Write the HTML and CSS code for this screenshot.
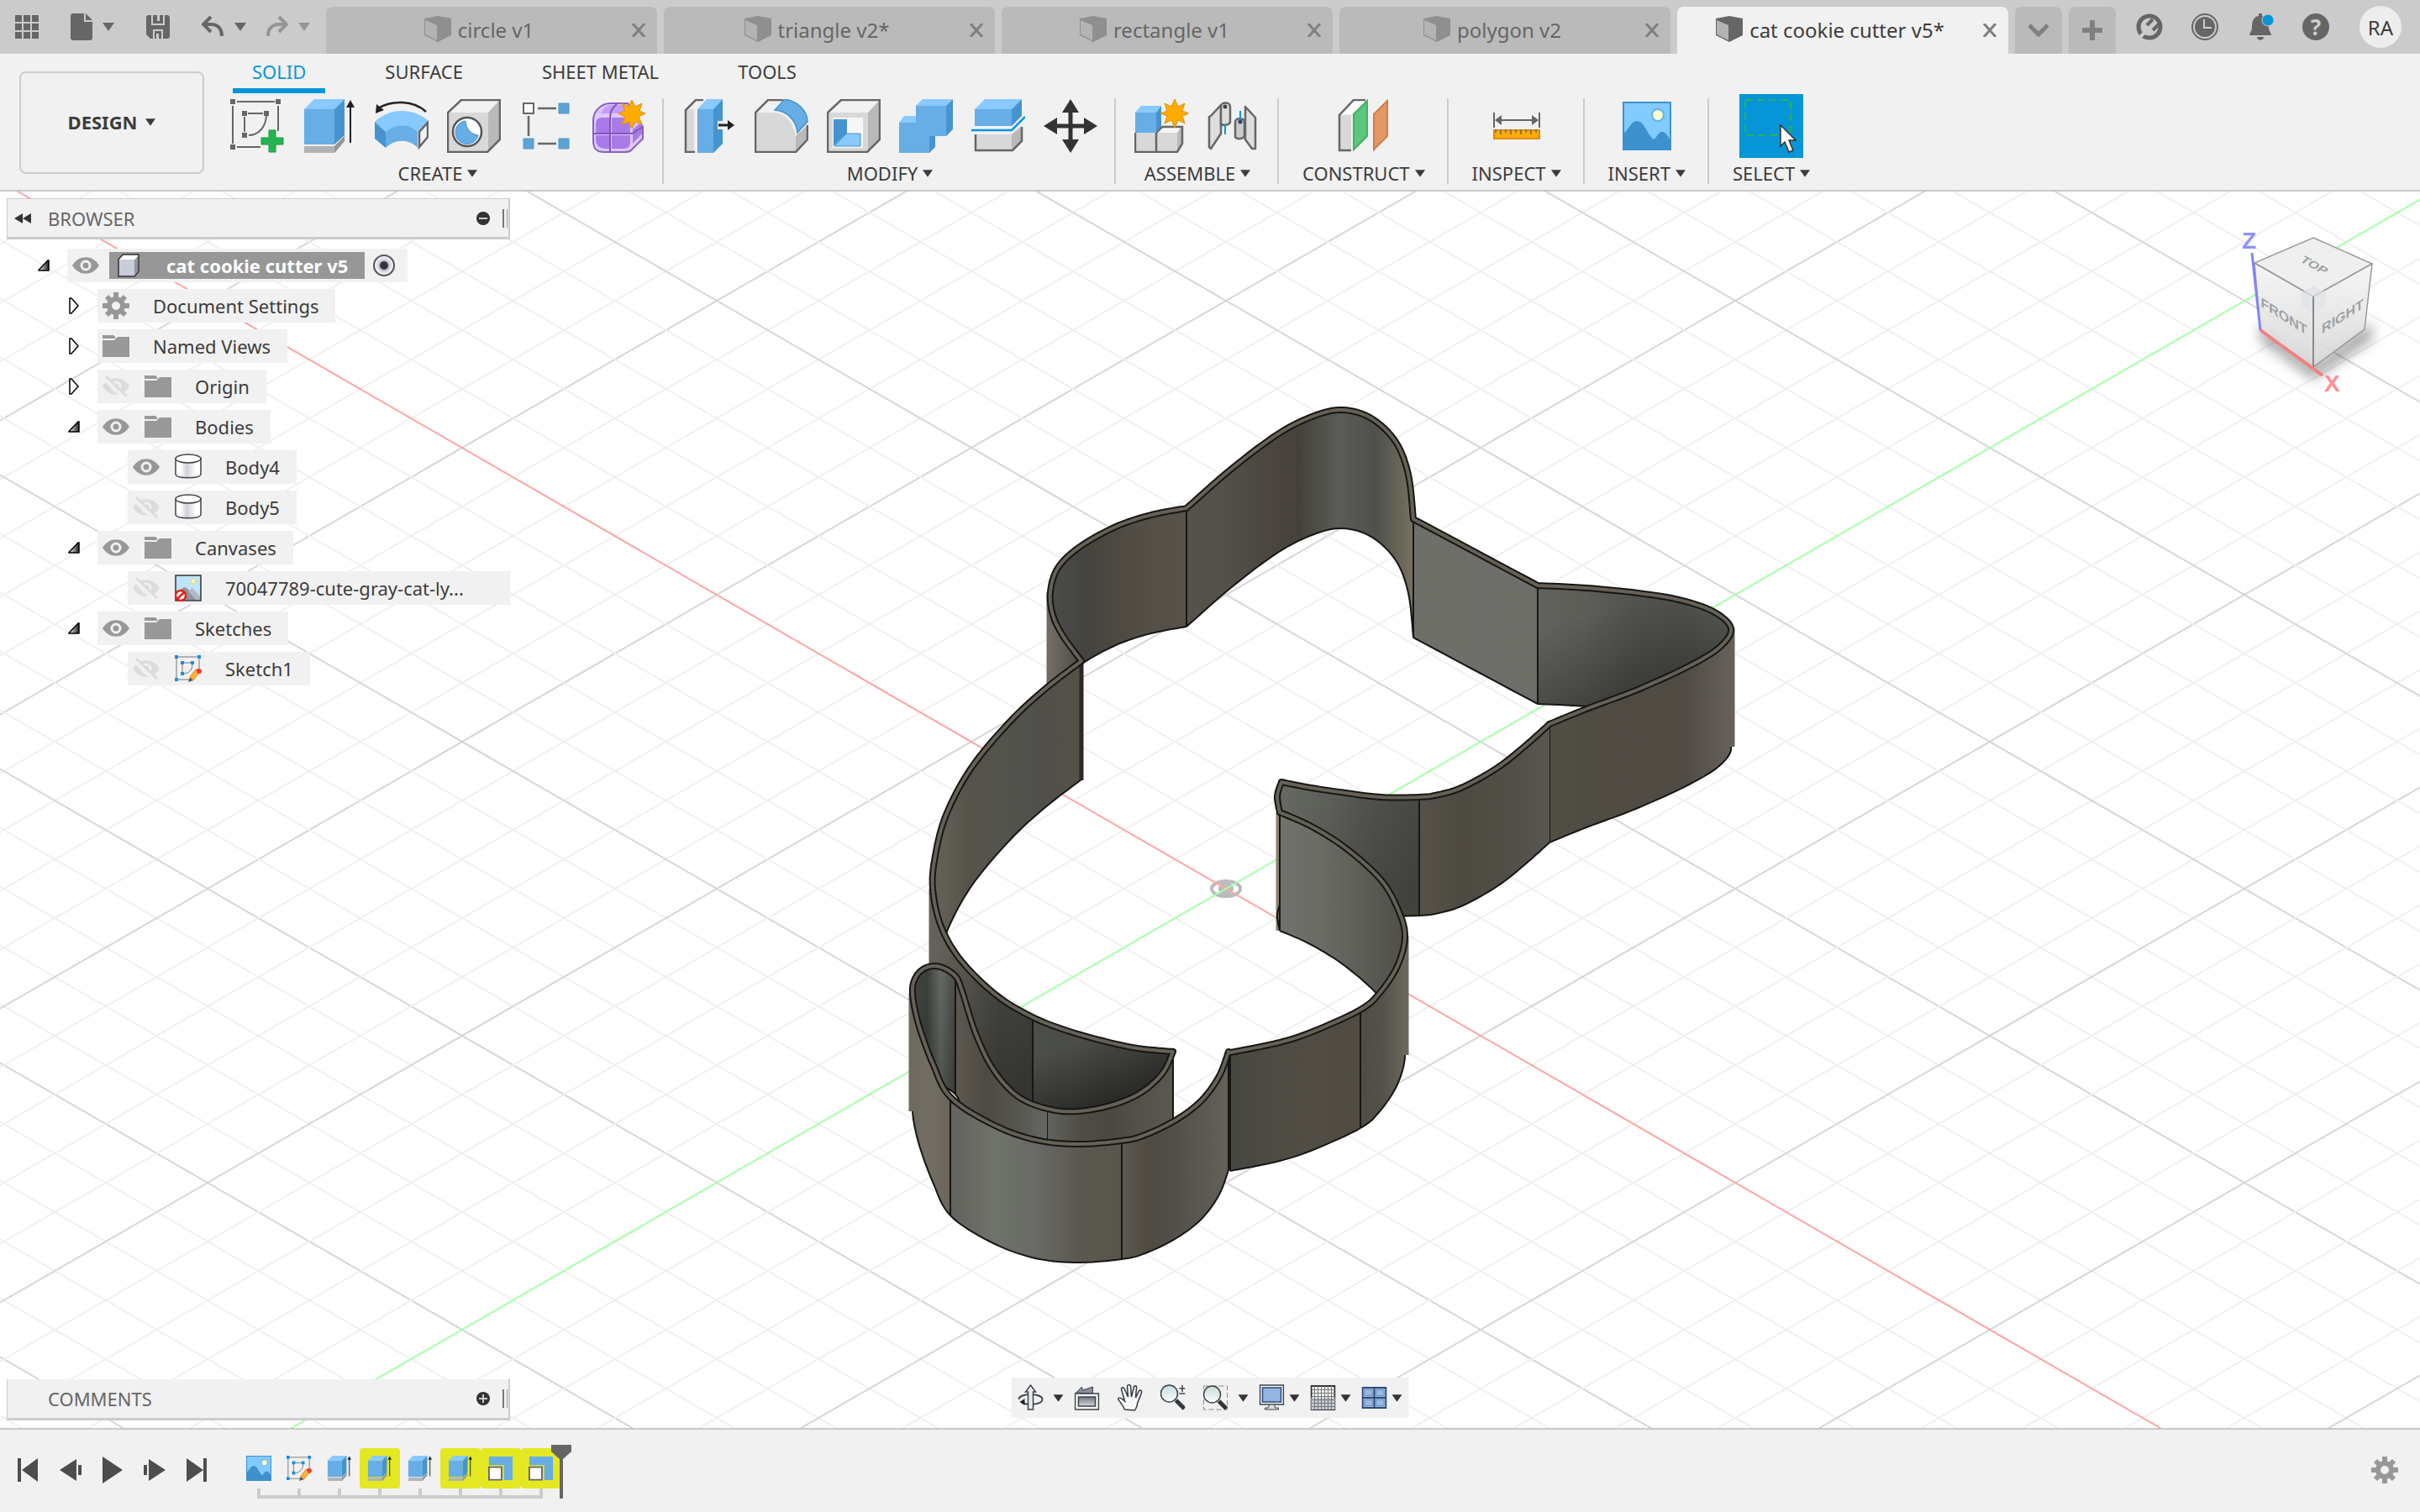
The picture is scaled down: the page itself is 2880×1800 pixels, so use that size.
FILE: index.html
```html
<!DOCTYPE html>
<html lang="en">
<head>
    <meta charset="UTF-8">
    <meta name="viewport" content="width=device-width, initial-scale=1.0">
    <title>cat cookie cutter v5*</title>
    <link rel="stylesheet" href="styles.css">
</head>
<body>
    <!-- shared icons -->
    <svg class="sprite" aria-hidden="true">
        <defs>
            <linearGradient id="g-steel" x1="0" y1="0" x2="0" y2="1"><stop offset="0" stop-color="#6f7681"/><stop offset="1" stop-color="#d5d8de"/></linearGradient>
            <linearGradient id="g-cyl"><stop offset="0" stop-color="#fff"/><stop offset=".2" stop-color="#fff"/><stop offset=".45" stop-color="#d0d1d5"/><stop offset=".8" stop-color="#fff"/></linearGradient>
            <linearGradient id="g-lens" x1="0" y1="0" x2="0" y2="1"><stop offset="0" stop-color="#c3dcda"/><stop offset="1" stop-color="#fbfefe"/></linearGradient>
            <linearGradient id="g-open"><stop offset="0" stop-color="#fff"/><stop offset="1" stop-color="#222"/></linearGradient>
            <linearGradient id="g-cube" x1="0" y1="0" x2="0" y2="1"><stop offset="0" stop-color="#f4f4f4"/><stop offset="1" stop-color="#d8d8d8"/></linearGradient>
        </defs>
        <symbol id="i-caret" viewBox="0 0 14 10"><path d="M0 0h14L7 10z" fill="currentColor"/></symbol>
        <symbol id="i-doc" viewBox="0 0 32 32">
            <path d="M0 3 16 0l16 3v20L16 31 0 23z" fill="currentColor"/>
            <path d="M1 5l14 6v18L1 22z" fill="#b2b4b4"/>
        </symbol>
        <symbol id="i-close" viewBox="0 0 16 16"><path d="M1 0 15 16M15 0 1 16" stroke="currentColor" stroke-width="3" fill="none"/></symbol>
        <symbol id="i-eye" viewBox="0 0 32 32">
            <path d="M0 16C8 3 24 3 32 16 24 29 8 29 0 16z" fill="#989898"/>
            <circle cx="16" cy="16" r="5" fill="none" stroke="#f1f1f1" stroke-width="3"/>
        </symbol>
        <symbol id="i-eye-off" viewBox="0 0 32 32">
            <path d="M0 16C8 3 24 3 32 16 24 29 8 29 0 16z" fill="#dcdcdc"/>
            <circle cx="16" cy="16" r="5" fill="none" stroke="#f1f1f1" stroke-width="3"/>
            <path d="M2 6 28 31" stroke="#f1f1f1" stroke-width="6"/>
            <path d="M4 4 29 28" stroke="#dcdcdc" stroke-width="3"/>
        </symbol>
        <symbol id="i-folder" viewBox="0 0 32 32"><path d="M0 3h13l3 3-2 1H0zM0 9h14l4-4h14v24H0z" fill="#989898"/></symbol>
        <symbol id="i-gear" viewBox="0 0 32 32">
            <circle cx="16" cy="16" r="8" fill="none" stroke="currentColor" stroke-width="6"/>
            <path d="M16 0v6M16 26v6M0 16h6M26 16h6M5 5l4 4M23 23l4 4M27 5l-4 4M9 23l-4 4" stroke="currentColor" stroke-width="6"/>
        </symbol>
        <symbol id="i-body" viewBox="0 0 32 32">
            <path d="M1 6v19c2 5 28 5 30 0V6z" fill="url(#g-cyl)" stroke="#3f4248" stroke-width="1.5"/>
            <ellipse cx="16" cy="6" rx="15" ry="5" fill="#fff" stroke="#3f4248" stroke-width="1.5"/>
        </symbol>
        <symbol id="i-sketch" viewBox="0 0 32 32">
            <path d="M4 2h24M2 4v23M29 4v14M4 29h13M10 9h11M9 11v10M21 10c0 8-4 11-10 12" fill="none" stroke="#777" stroke-width="1"/>
            <path d="M0 0h4v4H0zM27 0h4v4h-4zM0 27h4v4H0zM7 7h4v4H7zM19 7h4v4h-4zM7 20h4v4H7z" fill="#1590e6"/>
            <path d="M16 32l2-6 4 4z" fill="#555"/>
            <path d="M18 26l7-9 4 4-7 9z" fill="#fcb535" stroke="#d98c1c"/>
            <path d="M25 17l3-1 3 3-1 3z" fill="#f23a3a"/><circle cx="29" cy="19" r="3" fill="#f23a3a"/>
        </symbol>
        <symbol id="i-picture" viewBox="0 0 58 58">
            <path d="M1 1h56v56H1z" fill="#82cbff" stroke="#3d91cd" stroke-width="2"/>
            <circle cx="42" cy="16" r="7" fill="#ffffd0" stroke="#62b0e8" stroke-width="2"/>
            <path d="M1 38C7 34 10 23 17 23c9 0 12 16 20 22 4-2 5-9 10-9 6 0 7 7 10 10v11H1z" fill="#3d91cd"/>
        </symbol>
        <symbol id="i-extrude" viewBox="0 0 64 64">
            <path d="M2 56h36l12-12v6L38 64H2z" fill="#b2b2b2"/><path d="M38 56l12-12v6L38 64z" fill="#969696"/>
            <path d="M2 12h36v42H2z" fill="#67aee6"/><path d="M14 0h36L38 12H2z" fill="#88caff"/><path d="M38 12 50 0v43L38 54z" fill="#4594cf"/>
            <path d="M57 7v45" stroke="#222" stroke-width="2"/><path d="M52 10l5-9 5 9z" fill="#222"/>
        </symbol>
        <symbol id="i-scale" viewBox="0 0 32 32">
            <path d="M1 1h30v30H1z" fill="#67aee6"/><path d="M1 13h18v18H1z" fill="#fff" stroke="#e4e822" stroke-width="2"/>
            <path d="M1 14.500h16v16H1z" fill="#fff" stroke="#666" stroke-width="2"/>
        </symbol>
        <symbol id="i-closed" viewBox="0 0 14 20"><path d="M2 1h2l8 9-8 9H2z" fill="#fff" stroke="#000" stroke-width="1.500"/></symbol>
        <symbol id="i-opened" viewBox="0 0 14 20"><path d="M1 15.500 12 4h1v12H1z" fill="url(#g-open)" stroke="#000" stroke-width="1.500"/></symbol>
    </svg>

    <header class="topbar">
        <div class="quick">
            <button aria-label="Data panel"><svg width="28" height="28"><path d="M0 0h8v8H0zM10 0h8v8h-8zM20 0h8v8h-8zM0 10h8v8H0zM10 10h8v8h-8zM20 10h8v8h-8zM0 20h8v8H0zM10 20h8v8h-8zM20 20h8v8h-8z" fill="#666"/></svg></button>
            <button aria-label="File"><svg width="26" height="32"><path d="M2 0h14v10h10v20l-2 2H2l-2-2V2zM18 0l8 8h-8z" fill="#666"/></svg><svg class="caret"><use href="#i-caret"/></svg></button>
            <button aria-label="Save"><svg width="28" height="28"><path d="M2 0h24l2 2v24l-2 2H5l-5-5V2z" fill="#666"/><path d="M7 0v11h14V0M9 28V18h10v10" fill="none" stroke="#ccc" stroke-width="2"/><path d="M13 0h3v7h-3zM12 22h3v6h-3z" fill="#ccc"/></svg></button>
            <div class="history">
                <button aria-label="Undo"><svg width="27" height="26"><path d="M11 1 2 10l9 9M3 10h8c9 0 13 6 13 14" fill="none" stroke="#666" stroke-width="4"/></svg><svg class="caret"><use href="#i-caret"/></svg></button>
                <button class="faded" aria-label="Redo"><svg width="27" height="26"><path d="M16 1l9 9-9 9M24 10h-8C7 10 3 16 3 24" fill="none" stroke="#959595" stroke-width="4"/></svg><svg class="caret"><use href="#i-caret"/></svg></button>
            </div>
        </div>
        <nav class="doc-tabs">
            <div class="doc-tab"><a href="#"><svg class="doc"><use href="#i-doc"/></svg>circle v1</a><button aria-label="Close"><svg class="x"><use href="#i-close"/></svg></button></div>
            <div class="doc-tab"><a href="#"><svg class="doc"><use href="#i-doc"/></svg>triangle v2*</a><button aria-label="Close"><svg class="x"><use href="#i-close"/></svg></button></div>
            <div class="doc-tab"><a href="#"><svg class="doc"><use href="#i-doc"/></svg>rectangle v1</a><button aria-label="Close"><svg class="x"><use href="#i-close"/></svg></button></div>
            <div class="doc-tab"><a href="#"><svg class="doc"><use href="#i-doc"/></svg>polygon v2</a><button aria-label="Close"><svg class="x"><use href="#i-close"/></svg></button></div>
            <div class="doc-tab active"><a href="#"><svg class="doc"><use href="#i-doc"/></svg>cat cookie cutter v5*</a><button aria-label="Close"><svg class="x"><use href="#i-close"/></svg></button></div>
            <button class="tab-btn" aria-label="All tabs"><svg width="24" height="16"><path d="M1 2l11 11L23 2" fill="none" stroke="#808080" stroke-width="5"/></svg></button>
            <button class="tab-btn" aria-label="New tab"><svg width="24" height="24"><path d="M0 12h24M12 0v24" stroke="#808080" stroke-width="6"/></svg></button>
        </nav>
        <div class="account">
            <button aria-label="Extensions"><svg width="32" height="32"><circle cx="16" cy="16" r="13" fill="none" stroke="#666" stroke-width="5"/><path d="M3 30l9-9" stroke="#ccc" stroke-width="4"/><path d="M13 14l7-7M20 20l8-8" stroke="#666" stroke-width="4"/></svg></button>
            <button aria-label="Job status"><svg width="32" height="32"><circle cx="16" cy="16" r="15" fill="none" stroke="#666" stroke-width="2"/><circle cx="16" cy="16" r="12" fill="#666"/><path d="M15 7v10h9" fill="none" stroke="#ccc" stroke-width="2"/></svg></button>
            <button aria-label="Notifications"><svg width="32" height="32"><path d="M14 0h4v3c6 1 8 6 8 14 0 4 3 6 3 9H3c0-3 3-5 3-9 0-8 2-13 8-14zM12 28h8c0 5-8 5-8 0z" fill="#666"/><circle cx="25" cy="8" r="7" fill="#0696d7" stroke="#ccc"/></svg></button>
            <button class="help" aria-label="Help">?</button>
            <button class="avatar">RA</button>
        </div>
    </header>

    <section class="ribbon">
        <button class="workspace">DESIGN<svg class="caret small"><use href="#i-caret"/></svg></button>
        <div class="ribbon-main">
            <nav class="ribbon-tabs">
                <a class="active" href="#">SOLID</a>
                <a href="#">SURFACE</a>
                <a href="#">SHEET METAL</a>
                <a href="#">TOOLS</a>
            </nav>
            <div class="groups">
                <div class="group">
                    <div class="tools">
                        <button aria-label="Create sketch"><svg class="tool" viewBox="0 0 64 64"><path d="M8 3h45M3 8v45M57 8v30M8 57h28M21 17h18M17 21v18M43 20c-1 14-10 23-21 23" fill="none" stroke="#666" stroke-width="2"/><path d="M0 0h6v6H0zM54 0h6v6h-6zM0 54h6v6H0zM14 14h6v6h-6zM40 14h6v6h-6zM14 40h6v6h-6z" fill="#666"/><path d="M46 37h8v9h9v8h-9v9h-8v-9h-9v-8h9z" fill="#26b354" stroke="#169a40"/></svg></button>
                        <button aria-label="Extrude"><svg class="tool"><use href="#i-extrude"/></svg></button>
                        <button aria-label="Revolve"><svg class="tool" viewBox="0 0 64 64"><path d="M4 11C20 1 46 1 61 15" fill="none" stroke="#222" stroke-width="2.500"/><path d="M1 17l1-11 9 7z" fill="#222"/><path d="M0 27C18 10 46 10 64 26L52 39C42 30 24 30 13 39z" fill="#88caff"/><path d="M13 39C24 29 42 29 51 39v19c-10-11-27-11-38 0z" fill="#67aee6"/><path d="M0 27l13 12v19L0 47z" fill="#4594cf"/><path d="M53 39l10-11v17L53 57z" fill="#f1f1f1" stroke="#666" stroke-width="2.500"/></svg></button>
                        <button aria-label="Hole"><svg class="tool" viewBox="0 0 64 64"><path d="M1 16h48v47H1z" fill="#d8d8d8"/><path d="M16 1h47L49 16H1z" fill="#f2f2f2"/><path d="M63 1v47L49 63V16z" fill="#b9b9b9"/><path d="M17 1h46v47L48 63H1V16z" fill="none" stroke="#666" stroke-width="2.500"/><circle cx="24" cy="39" r="17" fill="#fff" stroke="#555" stroke-width="2.500"/><path d="M22 26c1 9 5 15 15 17-3 15-27 14-27-4 0-7 5-12 12-13z" fill="#67aee6" stroke="#4594cf"/></svg></button>
                        <button aria-label="Pattern"><svg class="tool" viewBox="0 0 64 64"><path d="M22 11h22M22 53h22M11 20v24" stroke="#666" stroke-width="2.500"/><path d="M5 5h12v12H5z" fill="#f8f8f8" stroke="#666" stroke-width="2"/><path d="M47 5h12v12H47zM47 47h12v12H47zM5 47h12v12H5z" fill="#5ea3d6" stroke="#4d96cc"/></svg></button>
                        <button aria-label="Create form"><svg class="tool" viewBox="0 0 64 64"><path d="M2 25C2 14 12 5 22 5h21l18 28v14L47 61c-2 2-5 2-8 2H15C7 63 2 60 2 50z" fill="#dcc8fb" stroke="#8b5fc4" stroke-width="2"/><path d="M12 15q4-8 12-8h20v10H12z" fill="#c39cff"/><path d="M5 30q0-7 6-8h10v18H5zM24 22h16q6 1 6 9v9H24zM5 43h16v16h-5Q5 58 5 49zM24 43h22v8q0 8-8 8H24zM49 36l11-9v14L49 53z" fill="#a97be8"/><path d="M2 41h46l13-8M22 63V22q0-10 8-16" fill="none" stroke="#8454bd" stroke-width="2"/><path d="M48 1l4 8 8-4-3 9 7 3-8 4 4 9-8-3-4 8-4-8-8 3 4-9-8-4 8-3-4-9 8 4z" fill="#ffab00" stroke="#e08e00"/></svg></button>
                    </div>
                    <button class="group-label">CREATE<svg class="caret small"><use href="#i-caret"/></svg></button>
                </div>
                <div class="group">
                    <div class="tools">
                        <button aria-label="Press pull"><svg class="tool" viewBox="0 0 64 64"><path d="M3 12h11v51H3z" fill="#d8d8d8"/><path d="M25 1H16L4 13v50h11" fill="none" stroke="#666" stroke-width="2.500"/><path d="M18 12h19v52H18z" fill="#67aee6"/><path d="M29 0h19L37 12H18z" fill="#88caff"/><path d="M37 12 48 0v53L37 64z" fill="#4594cf"/><path d="M42 26h12v-4l9 9-9 9v-4H42z" fill="#f1f1f1"/><path d="M43 31h12" stroke="#222" stroke-width="3"/><path d="M54 25l8 6-8 6z" fill="#222"/></svg></button>
                        <button aria-label="Fillet"><svg class="tool" viewBox="0 0 64 64"><path d="M1 16h20c18 0 28 16 28 34v13H1z" fill="#d8d8d8"/><path d="M49 44l14-13v17L49 63z" fill="#b9b9b9"/><path d="M34 1H16L1 16v47h48l14-15V31" fill="none" stroke="#666" stroke-width="2.500"/><path d="M36 0c17 3 27 15 27 27L51 40C50 26 39 14 24 13z" fill="#67aee6" stroke="#4594cf" stroke-width="1.500"/></svg></button>
                        <button aria-label="Shell"><svg class="tool" viewBox="0 0 64 64"><path d="M1 16h48v47H1z" fill="#d8d8d8"/><path d="M16 1h47L49 16H1z" fill="#f2f2f2"/><path d="M63 1v47L49 63V16z" fill="#b9b9b9"/><path d="M17 1h46v47L48 63H1V16z" fill="none" stroke="#666" stroke-width="2.500"/><path d="M7 22h36v36H7z" fill="#f6f6f6"/><path d="M8 24h16v17L8 56z" fill="#4594cf"/><path d="M9 56l14-15h17v15z" fill="#88caff" stroke="#4594cf"/></svg></button>
                        <button aria-label="Combine"><svg class="tool" viewBox="0 0 64 64"><path d="M0 28h20V8h36v36H36v20H0z" fill="#67aee6"/><path d="M28 0h36l-8 8H20zM6 20h14v8H0z" fill="#88caff"/><path d="M64 0v36l-8 8V8zM43 44v13l-7 7V44z" fill="#4594cf"/></svg></button>
                        <button aria-label="Split body"><svg class="tool" viewBox="0 0 64 64"><path d="M4 12h44v20H4z" fill="#67aee6"/><path d="M16 0h44L48 12H4z" fill="#88caff"/><path d="M60 0v20L48 32V12z" fill="#4594cf"/><path d="M0 37h48l16-16" fill="none" stroke="#0696e7" stroke-width="2.500"/><path d="M5 42h43l11-9v17L49 61H5z" fill="#d8d8d8"/><path d="M48 42l11-9v17L48 61z" fill="#b9b9b9"/><path d="M5 42v19h44l11-11V33" fill="none" stroke="#666" stroke-width="2.500"/></svg></button>
                        <button aria-label="Move"><svg class="tool" viewBox="0 0 64 64"><path d="M32 10v44M10 32h44" stroke="#333" stroke-width="5"/><path d="M32 0l10 16H22zM32 64l10-16H22zM0 32l16-10v20zM64 32 48 22v20z" fill="#333"/></svg></button>
                    </div>
                    <button class="group-label">MODIFY<svg class="caret small"><use href="#i-caret"/></svg></button>
                </div>
                <div class="group">
                    <div class="tools">
                        <button aria-label="New component"><svg class="tool" viewBox="0 0 64 64"><path d="M1 40h25v23H1zM26 40h25v23H26z" fill="#d8d8d8"/><path d="M26 40l6-7h24l-5 7z" fill="#f6f6f6"/><path d="M51 40l5-7v20l-5 10z" fill="#b9b9b9"/><path d="M1 40v23h50l6-10V33H33l-7 7v23" fill="none" stroke="#666" stroke-width="2.500"/><path d="M1 16h25v24H1z" fill="#67aee6"/><path d="M8 8h24l-6 8H1z" fill="#88caff"/><path d="M32 8v24l-6 8V16z" fill="#4594cf"/><path d="M48 0l4 9 8-4-3 9 8 3-8 3 3 9-8-4-4 9-4-9-8 4 3-9-8-3 8-3-3-9 8 4z" fill="#ffab00" stroke="#e08e00"/></svg></button>
                        <button aria-label="Joint"><svg class="tool" viewBox="0 0 64 64"><g stroke="#666" stroke-width="2.500" stroke-linejoin="round"><path d="M5 20 17 7v34L5 59l-2-2V21z" fill="#dedede"/><path d="M17 9c0-6 11-6 11 0v18c0 3-6 5-11 3z" fill="#ddd"/><path d="M46 9l12 13v37l-4 0-8-11z" fill="#dedede"/><path d="M34 27c0-5 11-5 11 0v17c-2 4-9 4-11 1z" fill="#ccc"/></g><circle cx="22" cy="9" r="2.500" fill="#444"/><path d="M22 30v12M40 14v12" stroke="#0696e7" stroke-width="2"/><circle cx="40" cy="27" r="2.500" fill="#345"/></svg></button>
                    </div>
                    <button class="group-label">ASSEMBLE<svg class="caret small"><use href="#i-caret"/></svg></button>
                </div>
                <div class="group">
                    <div class="tools">
                        <button aria-label="Offset plane"><svg class="tool" viewBox="0 0 64 64"><path d="M3 19h14v43H3z" fill="#d8d8d8"/><path d="M3 18 19 1h15L18 18z" fill="#fff"/><path d="M34 1H20L3 19v42h14" fill="none" stroke="#666" stroke-width="2.500"/><path d="M20 18 36 2v42L20 60z" fill="#5bc77d" stroke="#45ae68" stroke-width="2"/><path d="M44 18 60 2v42L44 60z" fill="#e59864" stroke="#cc7f4c" stroke-width="2"/></svg></button>
                    </div>
                    <button class="group-label">CONSTRUCT<svg class="caret small"><use href="#i-caret"/></svg></button>
                </div>
                <div class="group">
                    <div class="tools">
                        <button aria-label="Measure"><svg class="tool" viewBox="0 0 64 64"><path d="M5 16v18M59 16v18M10 25h44" stroke="#666" stroke-width="2"/><path d="M6 25l8-6v12zM58 25l-8-6v12z" fill="#666"/><path d="M5 37h54v10H5z" fill="#ffab00" stroke="#e08e00" stroke-width="2"/><path d="M7 36v4M13 36v6M19 36v4M25 36v6M31 36v4M37 36v6M43 36v4M49 36v6M55 36v4" stroke="#666" stroke-width="1.500"/></svg></button>
                    </div>
                    <button class="group-label">INSPECT<svg class="caret small"><use href="#i-caret"/></svg></button>
                </div>
                <div class="group">
                    <div class="tools">
                        <button aria-label="Insert canvas"><svg class="picture"><use href="#i-picture"/></svg></button>
                    </div>
                    <button class="group-label">INSERT<svg class="caret small"><use href="#i-caret"/></svg></button>
                </div>
                <div class="group">
                    <div class="tools">
                        <button class="selected" aria-label="Select"><svg width="76" height="76"><path d="M7 7h54v42H7z" fill="none" stroke="#27b454" stroke-width="2" stroke-dasharray="9 5"/><path d="M49 37v25l5-5 5 12 5-2-5-12h8z" fill="#fff" stroke="#333" stroke-width="1.500"/></svg></button>
                    </div>
                    <button class="group-label">SELECT<svg class="caret small"><use href="#i-caret"/></svg></button>
                </div>
            </div>
        </div>
    </section>

    <main class="viewport">
        <svg class="scene" viewBox="0 228 2880 1472" preserveAspectRatio="xMidYMid slice">
            <defs id="fills"></defs>
            <g id="grid"></g>
            <ellipse cx="1459" cy="1058" rx="17" ry="9" fill="#fff" fill-opacity=".4" stroke="#bcbcbc" stroke-width="4"/>
            <ellipse cx="1459" cy="1058" rx="9" ry="9" fill="#bcbcbc"/>
            <g id="axes" fill="none" stroke-width="2">
                <path d="M-273 58 3191 2058" stroke="#ffa5a5"/>
                <path d="M-273 2058 3191 58" stroke="#a5ffa5"/>
            </g>
            <g id="walls"></g>
            <g id="rim" fill="none" stroke-linejoin="round" stroke-linecap="round"></g>
        </svg>

        <aside class="panel">
            <div class="panel-head">
                <button aria-label="Collapse"><svg width="20" height="14"><path d="M0 7 10 1v12zM10 7l10-6v12z" fill="#333"/></svg></button>
                <h2>BROWSER</h2>
                <button aria-label="Hide panel"><svg width="18" height="18"><circle cx="9" cy="9" r="8" fill="#333"/><path d="M4 9h10" stroke="#ccc" stroke-width="2"/></svg></button>
                <span class="grip"></span>
            </div>
            <ul class="tree">
                <li>
                    <div class="node root"><svg class="arrow"><use href="#i-opened"/></svg>
                        <div class="row"><svg class="ico"><use href="#i-eye"/></svg><span class="name"><svg width="26" height="28"><path d="M1 7 6 1h19v20l-5 6H1z" fill="#c8cdd8" stroke="#333" stroke-width="1.500"/><path d="M2 7 7 2h17l-4 5z" fill="#fff"/><path d="M20 8l4-5v18l-4 5z" fill="#8f95a1"/></svg>cat cookie cutter v5</span><input type="radio" name="component" aria-label="Activate component" checked></div>
                    </div>
                    <ul>
                        <li><div class="node"><svg class="arrow"><use href="#i-closed"/></svg><div class="row"><svg class="ico gear"><use href="#i-gear"/></svg><span>Document Settings</span></div></div></li>
                        <li><div class="node"><svg class="arrow"><use href="#i-closed"/></svg><div class="row"><svg class="ico"><use href="#i-folder"/></svg><span>Named Views</span></div></div></li>
                        <li><div class="node"><svg class="arrow"><use href="#i-closed"/></svg><div class="row"><svg class="ico"><use href="#i-eye-off"/></svg><svg class="ico"><use href="#i-folder"/></svg><span>Origin</span></div></div></li>
                        <li><div class="node"><svg class="arrow"><use href="#i-opened"/></svg><div class="row"><svg class="ico"><use href="#i-eye"/></svg><svg class="ico"><use href="#i-folder"/></svg><span>Bodies</span></div></div>
                            <ul>
                                <li><div class="node"><span class="arrow"></span><div class="row"><svg class="ico"><use href="#i-eye"/></svg><svg class="ico"><use href="#i-body"/></svg><span>Body4</span></div></div></li>
                                <li><div class="node"><span class="arrow"></span><div class="row"><svg class="ico"><use href="#i-eye-off"/></svg><svg class="ico"><use href="#i-body"/></svg><span>Body5</span></div></div></li>
                            </ul>
                        </li>
                        <li><div class="node"><svg class="arrow"><use href="#i-opened"/></svg><div class="row"><svg class="ico"><use href="#i-eye"/></svg><svg class="ico"><use href="#i-folder"/></svg><span>Canvases</span></div></div>
                            <ul>
                                <li><div class="node"><span class="arrow"></span><div class="row long"><svg class="ico"><use href="#i-eye-off"/></svg><svg class="ico" viewBox="0 0 32 32"><path d="M1 1h30v30H1z" fill="#bfe3f7" stroke="#333" stroke-width="1.500"/><circle cx="22" cy="8" r="3" fill="#fff7b0" stroke="#f5d060"/><path d="M2 24c6-8 9-10 12-8l16 14H2z" fill="#8d949c"/><path d="M16 20l5-4 9 10v4h-5z" fill="#b3b9c2"/><circle cx="7" cy="25" r="6" fill="#fff" stroke="#e8201c" stroke-width="2.500"/><path d="M3 29l8-8" stroke="#e8201c" stroke-width="2.500"/></svg><span>70047789-cute-gray-cat-ly...</span></div></div></li>
                            </ul>
                        </li>
                        <li><div class="node"><svg class="arrow"><use href="#i-opened"/></svg><div class="row"><svg class="ico"><use href="#i-eye"/></svg><svg class="ico"><use href="#i-folder"/></svg><span>Sketches</span></div></div>
                            <ul>
                                <li><div class="node"><span class="arrow"></span><div class="row"><svg class="ico"><use href="#i-eye-off"/></svg><svg class="ico"><use href="#i-sketch"/></svg><span>Sketch1</span></div></div></li>
                            </ul>
                        </li>
                    </ul>
                </li>
            </ul>
        </aside>

        <svg class="viewcube" width="150" height="230" viewBox="2650 250 150 230">
            <defs><filter id="soft" x="-30%" y="-30%" width="160%" height="160%"><feGaussianBlur stdDeviation="8"/></filter></defs>
            <path d="M2690 385l63 50 68-50 2 18-70 48-62-46z" fill="#000" fill-opacity=".4" filter="url(#soft)"/>
            <g fill-opacity=".9" stroke="#9a9a9a" stroke-width="1.500">
                <path d="M2753 283l70 31-70 39-70-40z" fill="#ededed"/>
                <path d="M2683 313l70 40v84l-63-44z" fill="url(#g-cube)"/>
                <path d="M2823 314l-70 39v84l61-45z" fill="url(#g-cube)"/>
            </g>
            <path d="M2753 340l15 8v16l-15 9-15-9v-16z" fill="#dfe3e8" fill-opacity=".7"/>
            <path d="M2753 353v84" stroke="#8a8a8a" stroke-width="2"/>
            <path d="M2680 301l10 92" stroke="#8484f4" stroke-width="3"/>
            <path d="M2690 393l74 54" stroke="#f28080" stroke-width="4"/>
            <g class="face-text" text-anchor="middle">
                <text transform="translate(2751 319) matrix(.9 .5 -.6 .6 0 0)">TOP</text>
                <text transform="translate(2718 382) skewY(32)">FRONT</text>
                <text transform="translate(2788 382) skewY(-32)">RIGHT</text>
            </g>
            <text class="axis-z" x="2668" y="296">Z</text>
            <text class="axis-x" x="2766" y="466">X</text>
        </svg>

        <aside class="panel comments">
            <div class="panel-head">
                <h2>COMMENTS</h2>
                <button aria-label="Show comments"><svg width="18" height="18"><circle cx="9" cy="9" r="8" fill="#333"/><path d="M4 9h10M9 4v10" stroke="#ccc" stroke-width="2"/></svg></button>
                <span class="grip"></span>
            </div>
        </aside>

        <div class="navbar">
            <button class="wide" aria-label="Orbit"><svg class="nav"><path d="M1 18c0-8 28-8 28 0 0 6-18 8-25 3" fill="none" stroke="#3d434b" stroke-width="2"/><path d="M12 30V9H9l6-8 6 8h-3v21z" fill="#e8eaec" stroke="#3d434b" stroke-width="1.500"/><path d="M2 21l6-4v8z" fill="#222"/></svg><svg class="caret nav-caret"><use href="#i-caret"/></svg></button>
            <button class="single" aria-label="Look at"><svg class="nav"><path d="M2 10 9 3l1 4 12-4v8z" fill="#8a9099" stroke="#3d434b"/><path d="M1 11h28v19H1z" fill="#f6f6f8" stroke="#3d434b" stroke-width="1.500"/><path d="M5 15h20v11H5z" fill="url(#g-steel)" stroke="#3d434b" stroke-width="1.500"/></svg></button>
            <button class="single" aria-label="Pan"><svg class="nav"><path d="M9 30C7 25 3 21 1 17c2-2 4-1 8 3L5 6c0-3 3-3 4 0l4 9-1-13c1-2 3-2 4 0l1 13 3-12c1-2 4-1 3 1l-1 12 4-8c2-2 4 0 3 2l-5 13c0 4-2 6-3 8z" fill="#f8f8f8" stroke="#333a42" stroke-width="1.500"/></svg></button>
            <button class="single" aria-label="Zoom"><svg class="nav"><circle cx="11" cy="11" r="10" fill="url(#g-lens)" stroke="#3d434b" stroke-width="1.500"/><path d="M19 19l10 10" stroke="#33383f" stroke-width="5"/><path d="M23 5h7M26.500 1v8M23 11h7" stroke="#444" stroke-width="1.500"/></svg></button>
            <button class="fit" aria-label="Fit"><svg class="nav"><path d="M1 2h28v28H1z" fill="none" stroke="#888" stroke-dasharray="6 3"/><circle cx="11" cy="12" r="10" fill="url(#g-lens)" stroke="#444" stroke-width="1.500"/><path d="M19 20l9 9" stroke="#333" stroke-width="5"/></svg><svg class="caret nav-caret"><use href="#i-caret"/></svg></button>
            <button aria-label="Display settings"><svg class="nav"><path d="M1 1h28v23H1z" fill="#f4f4f4" stroke="#3d434b" stroke-width="1.500"/><path d="M4 4h22v17H4z" fill="#94b5df" stroke="#2b4a7a" stroke-width="1.500"/><path d="M12 24h6l1 4h4v2H7v-2h4z" fill="#ddd" stroke="#3d434b"/></svg><svg class="caret nav-caret"><use href="#i-caret"/></svg></button>
            <button aria-label="Grid and snaps"><svg class="nav"><path d="M1 2h28v28H1z" fill="#f4f5f8" stroke="#333" stroke-width="2"/><path d="M1 16h28v14H1z" fill="#c3cad6"/><path d="M5 2v28M9 2v28M13 2v28M17 2v28M21 2v28M25 2v28M1 6h28M1 10h28M1 14h28M1 18h28M1 22h28M1 26h28" stroke="#777" shape-rendering="crispEdges"/></svg><svg class="caret nav-caret"><use href="#i-caret"/></svg></button>
            <button aria-label="Viewports"><svg class="nav"><path d="M1 4h28v24H1z" fill="#9cb9df" stroke="#2b4a7a" stroke-width="2"/><path d="M15 4v24M1 16h28" stroke="#2b4a7a" stroke-width="2"/><path d="M3.500 6.500h9v7h-9zM17.500 6.500h9v7h-9zM3.500 18.500h9v7h-9zM17.500 18.500h9v7h-9z" fill="none" stroke="#6d8fc0"/></svg><svg class="caret nav-caret"><use href="#i-caret"/></svg></button>
        </div>
    </main>

    <footer class="timeline">
        <div class="playback">
            <button aria-label="Go to start"><svg width="26" height="30"><path d="M0 1h4v28H0zM24 1v28L5 15z" fill="#4d4d4d"/></svg></button>
            <button aria-label="Step back"><svg width="26" height="30"><path d="M20 2v26L0 15zM22 9h4v12h-4z" fill="#4d4d4d"/></svg></button>
            <button aria-label="Play"><svg width="24" height="32"><path d="M0 0v32l24-16z" fill="#4d4d4d"/></svg></button>
            <button aria-label="Step forward"><svg width="26" height="30"><path d="M6 2v26l20-13zM0 9h4v12H0z" fill="#4d4d4d"/></svg></button>
            <button aria-label="Go to end"><svg width="26" height="30"><path d="M1 1v28l20-14zM21 1h4v28h-4z" fill="#4d4d4d"/></svg></button>
        </div>
        <ol class="features">
            <li><button aria-label="Canvas"><svg class="feat"><use href="#i-picture"/></svg></button></li>
            <li><button aria-label="Sketch1"><svg class="feat"><use href="#i-sketch"/></svg></button></li>
            <li><button aria-label="Extrude1"><svg class="feat"><use href="#i-extrude"/></svg></button></li>
            <li><button class="warn" aria-label="Extrude2"><svg class="feat"><use href="#i-extrude"/></svg></button></li>
            <li><button aria-label="Extrude3"><svg class="feat"><use href="#i-extrude"/></svg></button></li>
            <li><button class="warn" aria-label="Extrude4"><svg class="feat"><use href="#i-extrude"/></svg></button></li>
            <li><button class="warn" aria-label="Scale1"><svg class="feat"><use href="#i-scale"/></svg></button></li>
            <li><button class="warn" aria-label="Scale2"><svg class="feat"><use href="#i-scale"/></svg></button></li>
            <li class="marker"><svg width="24" height="64"><path d="M0 0h24v8l-10 9v47h-4V17L0 8z" fill="#666"/></svg></li>
        </ol>
        <button class="settings" aria-label="Timeline settings"><svg class="ico"><use href="#i-gear"/></svg></button>
    </footer>

    <script src="scene.js"></script>
</body>
</html>
```

FILE: styles.css
```css
* {
    box-sizing: border-box;
}
body {
    margin: 0;
    height: 100vh;
    display: flex;
    flex-direction: column;
    font-family: "Noto Sans", "Open Sans", sans-serif;
    font-size: 22px;
    color: #3c3c3c;
    background-color: #f1f1f1;
}
button {
    display: flex;
    align-items: center;
    justify-content: center;
    padding: 0;
    border: none;
    background: none;
    color: inherit;
    font: inherit;
    cursor: pointer;
}
a {
    color: inherit;
    text-decoration: none;
}
svg {
    display: block;
    flex: none;
}
ul, ol {
    list-style: none;
    margin: 0;
    padding: 0;
}
.sprite {
    position: absolute;
    width: 0;
    height: 0;
}
.caret {
    width: 14px;
    height: 10px;
}
.caret.small {
    width: 12px;
    height: 9px;
}

/* top bar */
.topbar {
    display: flex;
    height: 64px;
    background-color: #cbcbcb;
}
.quick {
    flex: none;
    display: flex;
    align-items: center;
    gap: 38px;
    width: 388px;
    padding-left: 18px;
}
.quick button {
    gap: 12px;
    color: #666;
}
.quick .faded {
    color: #959595;
}
.history {
    display: flex;
    gap: 23px;
}
.doc-tabs {
    flex: 1;
    display: flex;
    gap: 8px;
    padding-top: 8px;
}
.doc-tab {
    flex: 1;
    display: flex;
    align-items: center;
    padding-right: 14px;
    border-radius: 8px 8px 0 0;
    background-color: #bababa;
    color: #666;
    font-size: 24px;
}
.doc-tab a {
    flex: 1;
    display: flex;
    align-items: center;
    justify-content: center;
    gap: 8px;
    height: 56px;
    padding-bottom: 2px;
    white-space: nowrap;
}
.doc {
    width: 32px;
    height: 32px;
    color: #8f8f8f;
}
.x {
    width: 16px;
    height: 16px;
    color: #808080;
}
.doc-tab.active {
    background-color: #f1f1f1;
    color: #3c3c3c;
}
.active .doc {
    color: #666;
}
.tab-btn {
    width: 56px;
    border-radius: 8px 8px 0 0;
    background-color: #bababa;
}
.account {
    flex: none;
    display: flex;
    align-items: center;
    gap: 34px;
    padding: 0 22px 0 24px;
}
.help {
    width: 32px;
    height: 32px;
    border-radius: 50%;
    background-color: #666;
    color: #ccc;
    font-weight: bold;
    font-size: 26px;
    line-height: 32px;
}
.avatar {
    width: 50px;
    height: 50px;
    margin-left: 2px;
    border-radius: 50%;
    background-color: #ededed;
    font-size: 24px;
}

/* ribbon */
.ribbon {
    display: flex;
    height: 164px;
    border-bottom: 2px solid #c8c8c8;
}
.workspace {
    flex: none;
    gap: 10px;
    width: 220px;
    height: 122px;
    margin: 21px 0 0 23px;
    padding-bottom: 2px;
    border: 2px solid #ccc;
    border-radius: 8px;
    font-weight: bold;
}
.ribbon-tabs {
    display: flex;
    gap: 48px;
    height: 48px;
    padding-left: 34px;
}
.ribbon-tabs a {
    height: 47px;
    padding: 0 23px;
    line-height: 42px;
}
.ribbon-tabs .active {
    color: #0696d7;
    border-bottom: 6px solid #0696d7;
}
.groups {
    display: flex;
    padding-left: 9px;
}
.group {
    position: relative;
    display: flex;
    flex-direction: column;
    align-items: center;
    padding: 0 16px;
}
.group + .group::before {
    content: "";
    position: absolute;
    left: -2px;
    top: 5px;
    width: 2px;
    height: 102px;
    background-color: #ccc;
}
.tools {
    display: flex;
    gap: 10px;
}
.tools button {
    width: 76px;
    height: 76px;
}
.tool {
    width: 64px;
    height: 64px;
}
.picture {
    width: 58px;
    height: 58px;
}
.selected {
    background-color: #0696d7;
}
.group-label {
    gap: 6px;
    height: 36px;
    padding: 0 12px;
}

/* 3d viewport */
.viewport {
    position: relative;
    flex: 1;
    overflow: hidden;
    background-color: #fff;
}
.scene {
    position: absolute;
    width: 100%;
    height: 100%;
}
.panel {
    position: absolute;
    left: 8px;
    top: 8px;
    width: 599px;
}
.panel-head {
    display: flex;
    align-items: center;
    height: 49px;
    padding: 0 1px 0 8px;
    border: 1px solid #ccc;
    border-width: 1px 2px 3px 1px;
    background-color: #f1f1f1;
}
.panel-head h2 {
    flex: 1;
    margin: 0 0 0 20px;
    font-size: 22px;
    font-weight: normal;
    color: #666;
}
.grip {
    width: 6px;
    height: 22px;
    margin-left: 14px;
    border-left: 2px solid #777;
    border-right: 1px solid #999;
}
.panel.comments {
    top: auto;
    bottom: 9px;
}
.comments .panel-head {
    border-top: none;
}
.comments h2 {
    margin-left: 40px;
}
.tree {
    padding: 11px 0 0 37px;
}
.tree ul {
    padding-left: 36px;
}
.node {
    display: flex;
    align-items: center;
    height: 40px;
    margin-bottom: 8px;
}
.arrow {
    width: 14px;
    height: 20px;
    margin-right: 21px;
}
.row {
    display: flex;
    align-items: center;
    gap: 18px;
    height: 40px;
    padding: 0 20px 0 6px;
    background-color: #f1f1f1;
    white-space: nowrap;
}
.row.long {
    flex: 1;
}
.row > span {
    margin-left: 10px;
}
.ico {
    width: 32px;
    height: 32px;
}
.gear {
    color: #989898;
}
.root .row {
    gap: 10px;
    padding-right: 15px;
}
.root .name {
    display: flex;
    align-items: center;
    gap: 32px;
    height: 32px;
    margin-left: 2px;
    padding: 0 20px 0 10px;
    background-color: #979797;
    color: #fff;
    font-weight: bold;
}
.root input {
    appearance: none;
    width: 26px;
    height: 26px;
    margin: 0;
    border: 2px solid #555;
    border-radius: 50%;
    background: radial-gradient(circle, #333 0 4px, #c9cedb 6px, #eef0f5 10px);
}
.viewcube {
    position: absolute;
    right: 80px;
    top: 22px;
    overflow: visible;
}
.face-text {
    font: bold 16px "Liberation Sans", sans-serif;
    fill: #9ea2a6;
}
.axis-z, .axis-x {
    font: bold 28px "Liberation Sans", sans-serif;
    fill: #9090ff;
}
.axis-x {
    fill: #ff9090;
}
.navbar {
    position: absolute;
    left: 50%;
    bottom: 12px;
    display: flex;
    align-items: center;
    gap: 13px;
    height: 48px;
    padding: 0 8px;
    background-color: #f1f1f1;
    transform: translateX(-50%);
}
.navbar button {
    gap: 6px;
    color: #333;
}
.navbar .wide, .navbar .fit {
    gap: 12px;
}
.navbar .single {
    margin-right: 8px;
}
.nav {
    width: 30px;
    height: 32px;
}
.nav-caret {
    width: 12px;
    height: 9px;
}

/* timeline */
.timeline {
    display: flex;
    align-items: flex-start;
    height: 100px;
    border-top: 2px solid #c8c8c8;
}
.playback {
    display: flex;
    padding: 24px 0 0 9px;
}
.playback button {
    width: 50px;
    height: 48px;
}
.features {
    position: relative;
    display: flex;
    margin: 22px auto 0 25px;
}
.features li:not(.marker)::after {
    content: "";
    display: block;
    width: 4px;
    height: 12px;
    margin: 0 auto;
    background-color: #ccc;
}
.features::after {
    content: "";
    position: absolute;
    left: 24px;
    right: 24px;
    top: 56px;
    height: 4px;
    background-color: #ccc;
}
.features button {
    width: 48px;
    height: 48px;
    border-radius: 4px;
}
.features .warn {
    background-color: #e4e822;
}
.feat {
    width: 30px;
    height: 32px;
}
.features .marker {
    position: absolute;
    right: -12px;
    top: -4px;
    z-index: 1;
}
.settings {
    margin: 32px 26px 0 0;
    color: #989898;
}
```

FILE: scene.js
```js
const NS = 'http://www.w3.org/2000/svg';
const HEIGHT = 141;
const ORIGIN = [1459, 1058];
const STEP = [303, 175]; // half diagonal of a major cell

function add(parent, tag, attrs) {
    const el = document.createElementNS(NS, tag);
    for (const key in attrs) el.setAttribute(key, attrs[key]);
    document.getElementById(parent).appendChild(el);
    return el;
}

// isometric floor grid, 5 minor cells in a major one
function drawGrid() {
    for (let i = -40; i <= 40; i++) {
        if (i === 0) continue;
        const x = ORIGIN[0] + i * STEP[0] * 2 / 5;
        const style = i % 5 === 0 ? { stroke: '#d6d6d6', 'stroke-width': 2 } : { stroke: '#f0f0f0', 'stroke-width': 2 };
        const dx = STEP[0] * 6;
        const dy = STEP[1] * 6;
        add('grid', 'path', { d: `M${x - dx} ${ORIGIN[1] - dy}L${x + dx} ${ORIGIN[1] + dy}M${x + dx} ${ORIGIN[1] - dy}L${x - dx} ${ORIGIN[1] + dy}`, ...style });
    }
}

// top edge of the cutter, one list per smooth run
const runs = {
    cheekL: [[1287, 787], [1265, 757], [1253, 732], [1250, 705], [1259, 676], [1285, 651], [1328, 627], [1370, 613], [1412, 605]],
    earL: [[1412, 605], [1467, 557], [1522, 516], [1564, 495], [1598, 488], [1632, 498], [1661, 526], [1676, 565], [1682, 618]],
    head: [[1682, 618], [1830, 697]],
    earR: [[1830, 697], [1888, 700], [1949, 706], [1998, 714], [2039, 728], [2060, 748], [2047, 770], [2010, 793], [1949, 821], [1888, 844], [1844, 862]],
    neck: [[1844, 862], [1815, 888], [1782, 914], [1741, 937], [1712, 946], [1689, 949], [1643, 949], [1602, 944], [1561, 938], [1525, 931]],
    tip: [[1525, 931], [1520, 948], [1523, 967]],
    belly: [[1523, 967], [1561, 984], [1602, 1010], [1643, 1047], [1664, 1083], [1672, 1115], [1663, 1150], [1642, 1182], [1619, 1202], [1565, 1227], [1523, 1241], [1464, 1253]],
    tail: [[1462, 1252], [1451, 1281], [1430, 1310], [1400, 1333], [1363, 1351], [1335, 1358], [1279, 1362], [1228, 1356], [1178, 1337], [1131, 1306], [1110, 1266], [1093, 1219], [1086, 1182], [1090, 1163], [1102, 1152], [1119, 1151], [1137, 1162], [1145, 1180], [1161, 1230], [1182, 1273], [1211, 1305], [1247, 1320], [1283, 1323], [1325, 1315], [1359, 1300], [1384, 1277], [1396, 1252]],
    back: [[1396, 1252], [1354, 1248], [1312, 1239], [1270, 1227], [1229, 1211], [1186, 1185], [1144, 1144], [1120, 1103], [1110, 1058], [1113, 1019], [1126, 970], [1156, 914], [1202, 859], [1244, 820], [1287, 787]]
};

// [run, from, to, colours left to right, seams (l/r) and silhouettes (L/R), shadow]
const faces = [
    ['earL', 0, 8, '#565249 #54514a #4c4840 #46423b #5a5c56 #4f504b #77715f', 'lr'],
    ['cheekL', 3, 8, '#4c4c48 #44433f #4e4a41 #545047 #575349', 'r'],
    ['head', 0, 1, '#6e6f69 #6c6e68', 'lr'],
    ['cheekL', 0, 3, '#716d62 #4c4b47', 'L'],
    ['back', 8, 14, '#67635a #555249 #53534e #504f49 #565249', 'r'],
    ['earR', 0, 5, '#62635d #5c5d57 #52534e #50524d #5c5f59', 'l', .4],
    ['earR', 5, 10, '#514e45 #4f4b42 #504c44 #504c44 #65615a', 'lR'],
    ['neck', 5, 9, '#666862 #5c5e58 #50514c #494945', 'r', .12],
    ['neck', 0, 5, '#575249 #4e4a41 #514e46 #585751', 'l'],
    ['tip', 0, 2, '#8a8474 #555', 'L'],
    ['belly', 0, 5, '#70726b #696b64 #5c5d57 #504f49', 'l'],
    ['belly', 5, 8, '#4e4c45 #55524a #6a665b', 'lR'],
    ['belly', 8, 11, '#464641 #4e4b43 #524d44 #4f4b42', 'lr'],
    ['back', 4, 8, '#66625a #5a5851 #4b4b46 #4c4e49', 'rL', .3],
    ['back', 0, 4, '#4c4e4a #4a4c47 #484945', 'l', .75],
    ['tail', 12, 16, '#45453f #3c3e3a #656963 #4a4c47', 'r', .2],
    ['tail', 16, 21, '#5d594f #4e4a43 #565550 #666963', 'lr'],
    ['tail', 21, 26, '#60635d #504d46 #4c4841 #54514a #5c5850', 'r'],
    ['tail', 9, 12, '#6e6a60 #726e63 #68645a', 'rL'],
    ['tail', 5, 9, '#60625b #70736c #686a64 #5b5850 #59554b', 'lr'],
    ['tail', 0, 5, '#5d5950 #4e4a41 #53504a #5a5851 #65615a', 'lr']
];

// Catmull-Rom through every point
function sample(pts) {
    const out = [pts[0]];
    for (let i = 0; i < pts.length - 1; i++) {
        const p = [pts[i - 1] || pts[i], pts[i], pts[i + 1], pts[i + 2] || pts[i + 1]];
        for (let s = 1; s <= 8; s++) {
            const t = s / 8;
            out.push([0, 1].map(k => .5 * (2 * p[1][k] + (p[2][k] - p[0][k]) * t
                + (2 * p[0][k] - 5 * p[1][k] + 4 * p[2][k] - p[3][k]) * t * t
                + (3 * p[1][k] - p[0][k] - 3 * p[2][k] + p[3][k]) * t * t * t)));
        }
    }
    return out;
}

const line = pts => pts.map(p => p[0].toFixed(1) + ' ' + p[1].toFixed(1)).join('L');

function drawFace([run, from, to, colours, edges = '', shadow = 0], n) {
    const top = sample(runs[run]).slice(from * 8, to * 8 + 1);
    if (top[0][0] > top[top.length - 1][0]) top.reverse();
    const first = top[0];
    const last = top[top.length - 1];
    const bottom = top.map(p => [p[0], p[1] + HEIGHT]);
    const d = 'M' + line(top) + 'L' + line(bottom.slice().reverse()) + 'z';
    const stops = colours.split(' ');
    const grad = add('fills', 'linearGradient', { id: 'face' + n });
    grad.innerHTML = stops.map((c, i) => `<stop offset="${i / (stops.length - 1)}" stop-color="${c}"/>`).join('');

    // the outer side sticks out by half of the wall thickness
    if (edges.includes('L')) add('walls', 'path', { d: `M${first[0] - 2} ${first[1]}v${HEIGHT}`, stroke: stops[0], 'stroke-width': 5 });
    if (edges.includes('R')) add('walls', 'path', { d: `M${last[0] + 2} ${last[1]}v${HEIGHT}`, stroke: stops[stops.length - 1], 'stroke-width': 5 });

    add('walls', 'path', { d, fill: `url(#face${n})` });
    if (shadow) {
        const dark = add('fills', 'linearGradient', { id: 'dark' + n, x1: .2, y1: 0, x2: .5, y2: .9 });
        dark.innerHTML = `<stop offset=".2" stop-opacity="0"/><stop offset="1" stop-opacity="${shadow}"/>`;
        add('walls', 'path', { d, fill: `url(#dark${n})` });
    }
    let seams = 'M' + line(bottom);
    if (edges.includes('l')) seams += `M${first}v${HEIGHT}`;
    if (edges.includes('r')) seams += `M${last}v${HEIGHT}`;
    add('walls', 'path', { d: seams, fill: 'none', stroke: '#161614', 'stroke-width': 2 });
}

function drawRim() {
    const d = Object.values(runs).map(pts => 'M' + line(sample(pts))).join('');
    add('rim', 'path', { d, stroke: '#161614', 'stroke-width': 8 });
    add('rim', 'path', { d, stroke: '#666156', 'stroke-width': 4 });
}

drawGrid();
faces.forEach(drawFace);
// wall thickness at the left notch
add('walls', 'path', { d: 'M1287 787v142', fill: 'none', stroke: '#2a2926', 'stroke-width': 5 });
drawRim();
```
